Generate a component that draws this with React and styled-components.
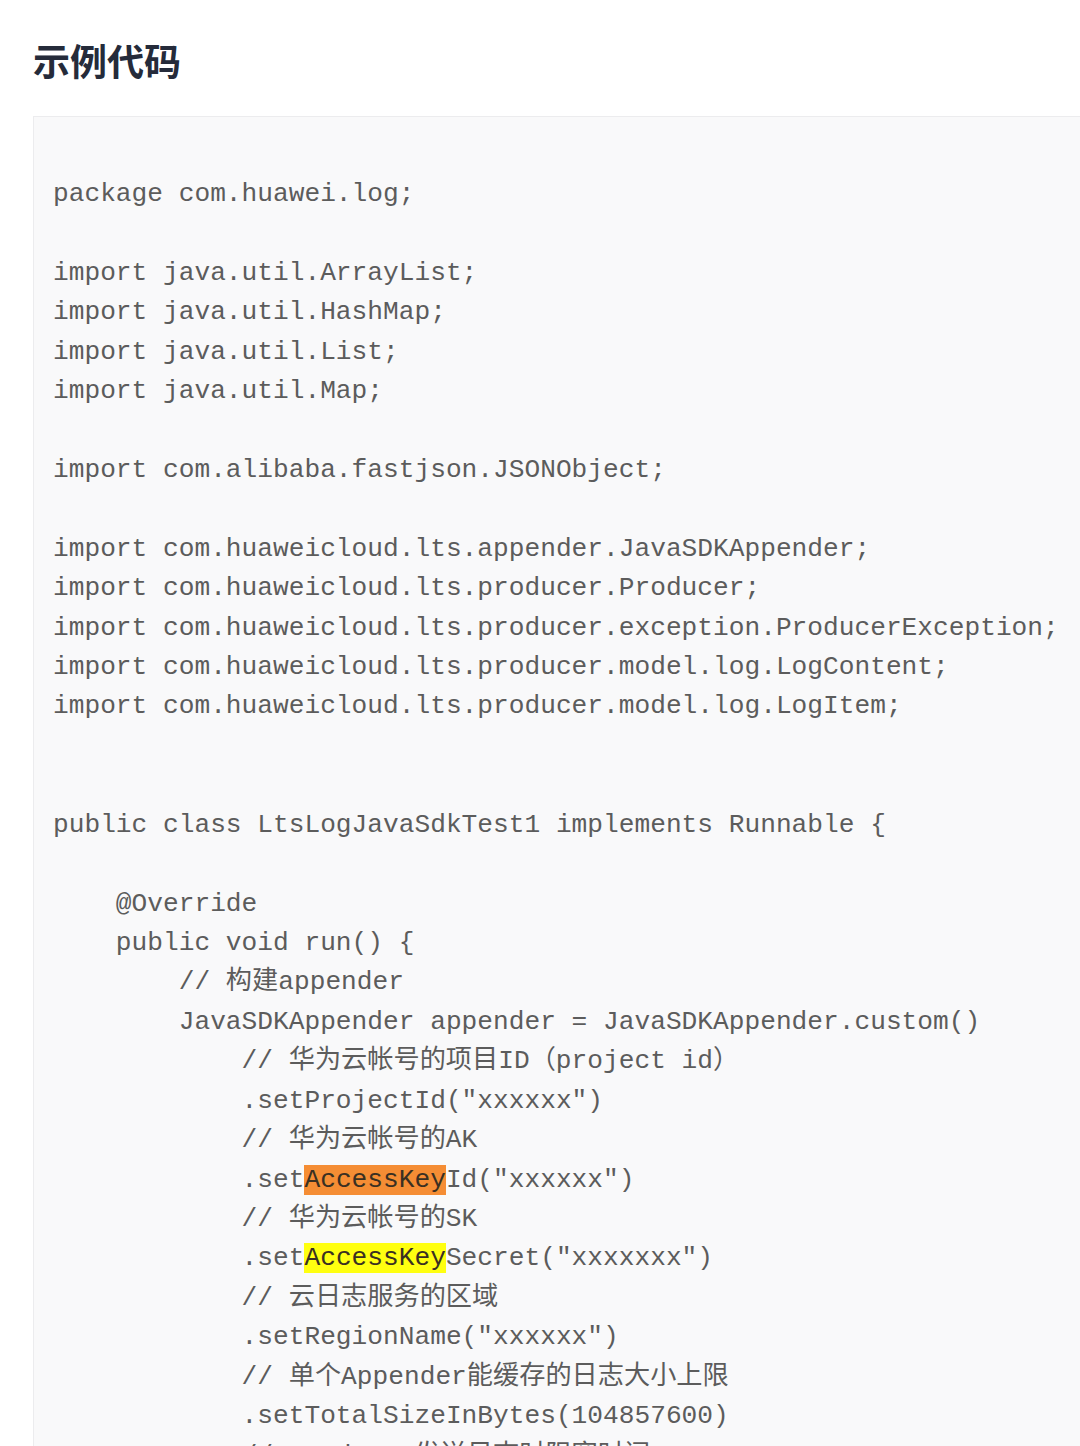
import React from "react";
import styled, { createGlobalStyle } from "styled-components";

const GlobalStyle = createGlobalStyle`
  html, body {
    margin: 0;
    padding: 0;
    background: #ffffff;
  }
  body {
    overflow: hidden;
  }
`;

const Page = styled.main`
  padding: 38px 0 0 33px;
  font-family: "Noto Sans CJK SC", "Noto Sans", sans-serif;
`;

const Title = styled.h2`
  margin: 0 0 34px;
  font-size: 37px;
  line-height: 44px;
  font-weight: 700;
  color: #252b3a;
`;

const CodeBlock = styled.pre`
  margin: 0;
  width: 1200px;
  padding: 58px 19px 40px;
  background: #f9f9fa;
  border: 1px solid #ececee;
  font-family: "Liberation Mono", "Noto Sans CJK SC", monospace;
  font-size: 26.2px;
  line-height: 39.42px;
  color: #5c5c5c;
  white-space: pre;
`;

const Mark = styled.span`
  background: ${(p) => (p.$tone === "orange" ? "#f58d34" : "#ffff10")};
  color: #3a3022;
`;

const code = [
  "package com.huawei.log;",
  "",
  "import java.util.ArrayList;",
  "import java.util.HashMap;",
  "import java.util.List;",
  "import java.util.Map;",
  "",
  "import com.alibaba.fastjson.JSONObject;",
  "",
  "import com.huaweicloud.lts.appender.JavaSDKAppender;",
  "import com.huaweicloud.lts.producer.Producer;",
  "import com.huaweicloud.lts.producer.exception.ProducerException;",
  "import com.huaweicloud.lts.producer.model.log.LogContent;",
  "import com.huaweicloud.lts.producer.model.log.LogItem;",
  "",
  "",
  "public class LtsLogJavaSdkTest1 implements Runnable {",
  "",
  "    @Override",
  "    public void run() {",
  "        // 构建appender",
  "        JavaSDKAppender appender = JavaSDKAppender.custom()",
  "            // 华为云帐号的项目ID（project id）",
  '            .setProjectId("xxxxxx")',
  "            // 华为云帐号的AK",
  "@@orange",
  "            // 华为云帐号的SK",
  "@@yellow",
  "            // 云日志服务的区域",
  '            .setRegionName("xxxxxx")',
  "            // 单个Appender能缓存的日志大小上限",
  "            .setTotalSizeInBytes(104857600)",
  "            // producer发送日志时阻塞时间",
];

const renderLine = (line) => {
  if (line === "@@orange") {
    return (
      <>
        {"            .set"}
        <Mark $tone="orange">AccessKey</Mark>
        {'Id("xxxxxx")'}
      </>
    );
  }
  if (line === "@@yellow") {
    return (
      <>
        {"            .set"}
        <Mark $tone="yellow">AccessKey</Mark>
        {'Secret("xxxxxxx")'}
      </>
    );
  }
  return line;
};

export default function App() {
  return (
    <>
      <GlobalStyle />
      <Page>
        <Title>示例代码</Title>
        <CodeBlock>
          {code.map((line, i) => (
            <React.Fragment key={i}>
              {renderLine(line)}
              {"\n"}
            </React.Fragment>
          ))}
        </CodeBlock>
      </Page>
    </>
  );
}
